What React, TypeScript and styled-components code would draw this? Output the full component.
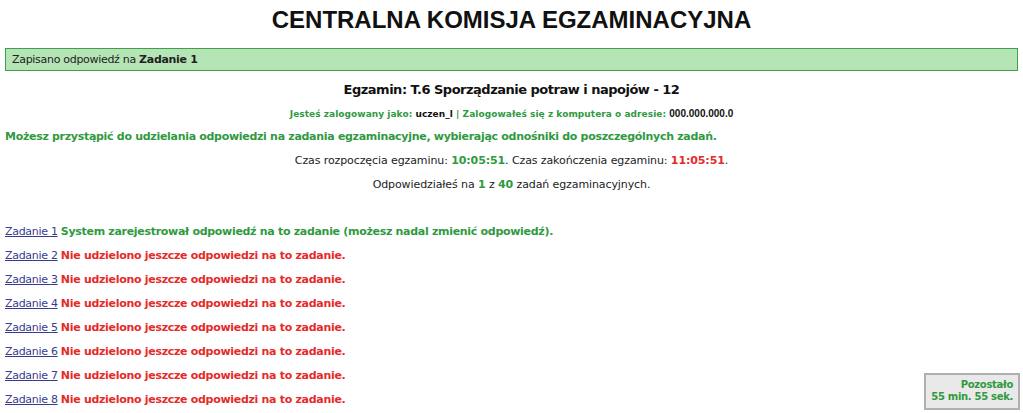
import styled, { createGlobalStyle } from "styled-components";

const GlobalStyle = createGlobalStyle`
  html, body {
    margin: 0;
    padding: 0;
    background: #fff;
  }
  body {
    font-family: "DejaVu Sans", Verdana, sans-serif;
    font-size: 11px;
    letter-spacing: -0.3px;
    color: #222;
  }
`;

const tasks = [
  { id: 1, answered: true },
  { id: 2, answered: false },
  { id: 3, answered: false },
  { id: 4, answered: false },
  { id: 5, answered: false },
  { id: 6, answered: false },
  { id: 7, answered: false },
  { id: 8, answered: false },
];

export default function App() {
  return (
    <>
      <GlobalStyle />
      <Page>
        <Title>CENTRALNA KOMISJA EGZAMINACYJNA</Title>

        <Notice>
          Zapisano odpowiedź na <b>Zadanie 1</b>
        </Notice>

        <ExamName>Egzamin: T.6 Sporządzanie potraw i napojów - 12</ExamName>

        <LoginLine>
          <Green>Jesteś zalogowany jako:</Green> uczen_l <Green>|</Green>{" "}
          <Green>Zalogowałeś się z komputera o adresie:</Green>{" "}
          <Address>000.000.000.0</Address>
        </LoginLine>

        <Info>
          Możesz przystąpić do udzielania odpowiedzi na zadania egzaminacyjne,
          wybierając odnośniki do poszczególnych zadań.
        </Info>

        <Centered>
          Czas rozpoczęcia egzaminu: <Green>10:05:51</Green>. Czas zakończenia
          egzaminu: <Red>11:05:51</Red>.
        </Centered>

        <Centered>
          Odpowiedziałeś na <Green>1</Green> z <Green>40</Green> zadań
          egzaminacyjnych.
        </Centered>

        <TaskList>
          {tasks.map((t) => (
            <TaskRow key={t.id}>
              <TaskLink href="#">Zadanie {t.id}</TaskLink>{" "}
              {t.answered ? (
                <Green>
                  System zarejestrował odpowiedź na to zadanie (możesz nadal
                  zmienić odpowiedź).
                </Green>
              ) : (
                <Red>Nie udzielono jeszcze odpowiedzi na to zadanie.</Red>
              )}
            </TaskRow>
          ))}
        </TaskList>
      </Page>

      <Timer>
        Pozostało
        <br />
        55 min. 55 sek.
      </Timer>
    </>
  );
}

const Page = styled.div`
  padding: 0 5px;
`;

const Title = styled.h1`
  margin: 0;
  padding-top: 6px;
  height: 42px;
  box-sizing: border-box;
  text-align: center;
  font-family: "Liberation Sans", Arial, sans-serif;
  font-size: 24px;
  font-weight: bold;
  letter-spacing: 0;
  color: #111;
`;

const Notice = styled.div`
  height: 23px;
  box-sizing: border-box;
  padding: 3px 6px;
  margin-top: 6px;
  background: #b5e5b5;
  border: 1px solid #3f9f4f;
  color: #222;
  line-height: 15px;
`;

const ExamName = styled.div`
  margin-top: 10px;
  text-align: center;
  font-size: 13px;
  letter-spacing: -0.5px;
  font-weight: bold;
  line-height: 18px;
  color: #111;
`;

const LoginLine = styled.div`
  margin-top: 8px;
  text-align: center;
  font-size: 9px;
  letter-spacing: 0.05px;
  font-weight: bold;
  line-height: 14px;
  color: #111;
`;

const Address = styled.span`
  font-family: "Liberation Sans", Arial, sans-serif;
  font-size: 10px;
  letter-spacing: 0;
`;

const Info = styled.div`
  margin-top: 8px;
  font-weight: bold;
  line-height: 16px;
  color: #2f9a3f;
`;

const Centered = styled.div`
  margin-top: 8px;
  text-align: center;
  line-height: 16px;
  letter-spacing: -0.1px;
`;

const Green = styled.span`
  color: #2f9a3f;
  font-weight: bold;
`;

const Red = styled.span`
  color: #e52a2a;
  font-weight: bold;
`;

const TaskList = styled.div`
  margin-top: 31px;
  display: flex;
  flex-direction: column;
  gap: 8px;
`;

const TaskRow = styled.div`
  line-height: 16px;
`;

const TaskLink = styled.a`
  color: #3a3a8c;
  text-decoration: underline;
`;

const Timer = styled.div`
  position: fixed;
  right: 3px;
  bottom: 3px;
  padding: 4px 5px 5px 5px;
  white-space: nowrap;
  background: #e9e9e9;
  border: 2px solid #b0b0b0;
  text-align: right;
  font-size: 10px;
  font-weight: bold;
  line-height: 12px;
  color: #2f9a3f;
`;
